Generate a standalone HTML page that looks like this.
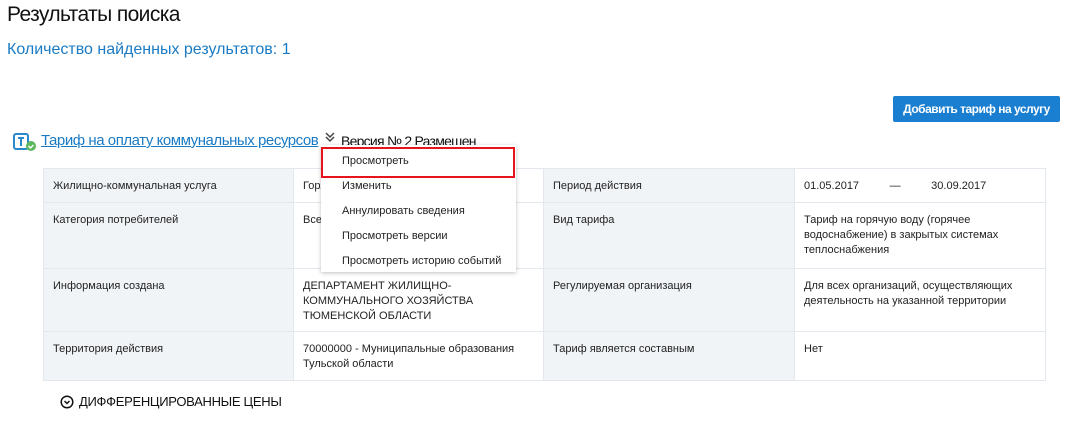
<!DOCTYPE html>
<html><head><meta charset="utf-8"><style>
body{margin:0;width:1067px;height:437px;background:#fff;font-family:"Liberation Sans",sans-serif;position:relative;overflow:hidden;color:#222}
.a{position:absolute;white-space:nowrap}
table{position:absolute;left:43px;top:168px;border-collapse:collapse;font-size:11px;color:#222}
td{border:1px solid #e3e8ee;vertical-align:top;padding:10px 9px 0 9px;line-height:15px;box-sizing:border-box}
td.l{background:#f1f4f7}
.menu{position:absolute;left:321px;top:145px;width:195px;height:127px;background:#fff;box-shadow:0 1px 4px rgba(0,0,0,.25);font-size:11px}
.menu div{position:absolute;left:21px}
</style></head><body>
<div class="a" style="left:7px;top:3px;font-size:21px;color:#111;letter-spacing:-0.6px">Результаты поиска</div>
<div class="a" style="left:7px;top:41px;font-size:16px;color:#1a7bc4;letter-spacing:0px">Количество найденных результатов: 1</div>
<div class="a" style="left:893px;top:96px;width:167px;height:26px;background:#1a7fd1;border-radius:2px;color:#fff;font-size:12px;font-weight:bold;text-align:center;line-height:26px;letter-spacing:-0.5px">Добавить тариф на услугу</div>
<svg class="a" style="left:13px;top:132px" width="24" height="20" viewBox="0 0 24 20"><rect x="1" y="2" width="14" height="15" rx="2" fill="none" stroke="#2a88cc" stroke-width="2"/><path d="M5 6h6M8 6v8" stroke="#2a88cc" stroke-width="2"/><circle cx="18" cy="14" r="5" fill="#5cb85c"/><path d="M15.5 14l2 2 3-3" stroke="#fff" stroke-width="1.5" fill="none"/></svg>
<div class="a" style="left:41px;top:132px;font-size:15px;color:#1a7bc4;text-decoration:underline;letter-spacing:-0.45px">Тариф на оплату коммунальных ресурсов</div>
<svg class="a" style="left:324px;top:131px" width="12" height="12" viewBox="0 0 12 12"><path d="M2 2l4 4 4-4M2 6l4 4 4-4" stroke="#444" stroke-width="1.5" fill="none"/></svg>
<div class="a" style="left:341px;top:133px;font-size:14px;color:#111;letter-spacing:-0.75px">Версия № 2 Размещен</div>
<table>
<tr style="height:34px"><td class="l" style="width:250px">Жилищно-коммунальная услуга</td><td style="width:250px">Горячее водоснабжение</td><td class="l" style="width:251px">Период действия</td><td style="width:251px">01.05.2017 &nbsp; &nbsp; &nbsp; &nbsp; &nbsp;— &nbsp; &nbsp; &nbsp; &nbsp; &nbsp;30.09.2017</td></tr>
<tr style="height:66px"><td class="l">Категория потребителей</td><td>Все категории</td><td class="l">Вид тарифа</td><td>Тариф на горячую воду (горячее водоснабжение) в закрытых системах теплоснабжения</td></tr>
<tr style="height:63px"><td class="l">Информация создана</td><td>ДЕПАРТАМЕНТ ЖИЛИЩНО-<br>КОММУНАЛЬНОГО ХОЗЯЙСТВА<br>ТЮМЕНСКОЙ ОБЛАСТИ</td><td class="l">Регулируемая организация</td><td>Для всех организаций, осуществляющих деятельность на указанной территории</td></tr>
<tr style="height:49px"><td class="l">Территория действия</td><td>70000000 - Муниципальные образования Тульской области</td><td class="l">Тариф является составным</td><td>Нет</td></tr>
</table>
<div class="menu">
<div style="top:10px">Просмотреть</div>
<div style="top:35px">Изменить</div>
<div style="top:60px">Аннулировать сведения</div>
<div style="top:85px">Просмотреть версии</div>
<div style="top:110px">Просмотреть историю событий</div>
</div>
<div class="a" style="left:321px;top:147px;width:190px;height:27px;border:2px solid #e8141b"></div>
<svg class="a" style="left:60px;top:395px" width="14" height="14" viewBox="0 0 14 14"><circle cx="7" cy="7" r="5.8" fill="none" stroke="#111" stroke-width="1.5"/><path d="M4.5 6l2.5 2.5 2.5-2.5" stroke="#111" stroke-width="1.5" fill="none"/></svg>
<div class="a" style="left:79px;top:394px;font-size:13px;color:#111;letter-spacing:-0.3px">ДИФФЕРЕНЦИРОВАННЫЕ ЦЕНЫ</div>
</body></html>
